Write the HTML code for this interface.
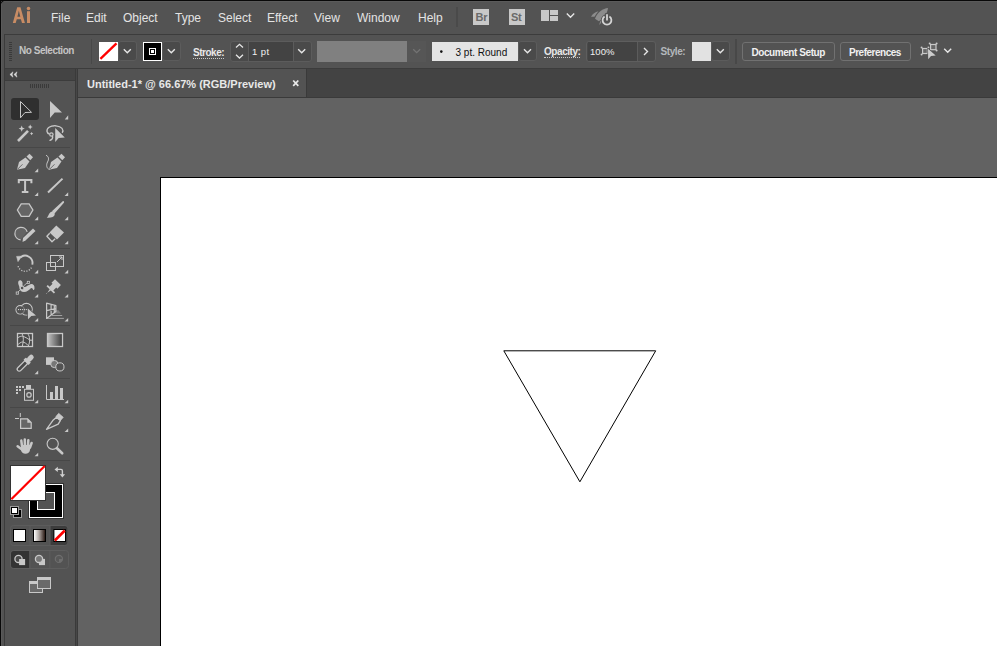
<!DOCTYPE html>
<html><head><meta charset="utf-8">
<style>
*{margin:0;padding:0;box-sizing:border-box}
html,body{width:997px;height:646px;overflow:hidden;background:#535353;font-family:"Liberation Sans",sans-serif}
.a{position:absolute}
.t{position:absolute;white-space:nowrap;line-height:1}
.m{font-size:12px;color:#e4e4e4;top:12px}
.c{font-size:9.5px;font-weight:bold;color:#e6e6e6}
</style></head>
<body>
<!-- window edge -->
<div class="a" style="left:0;top:0;width:997px;height:1px;background:#080808"></div>
<div class="a" style="left:0;top:0;width:1px;height:646px;background:#080808"></div>
<div class="a" style="left:4px;top:1px;width:993px;height:1px;background:#5a5a5a"></div>
<div class="a" style="left:1px;top:4px;width:1px;height:642px;background:#5a5a5a"></div>
<svg class="a" style="left:0;top:0" width="5" height="5"><rect x="1" y="1" width="3" height="3" fill="#535353"/><rect x="1" y="1" width="1" height="1" fill="#3c3c3c"/><rect x="2" y="1" width="1" height="1" fill="#151515"/><rect x="1" y="2" width="1" height="1" fill="#151515"/><rect x="3" y="1" width="1" height="1" fill="#454545"/><rect x="1" y="3" width="1" height="1" fill="#454545"/><rect x="2" y="2" width="1" height="1" fill="#4a4a4a"/></svg>

<!-- menu bar -->
<svg class="a" style="left:0;top:0" width="40" height="30"><path fill-rule="evenodd" d="M12.8 23 L17.2 7.2 L20.5 7.2 L24.9 23 L22 23 L20.9 19.2 L16.8 19.2 L15.7 23 Z M17.4 16.8 L20.3 16.8 L18.85 10.8 Z" fill="#c88c64"/><rect x="27" y="11.2" width="3" height="11.8" fill="#c88c64"/><circle cx="28.5" cy="8.6" r="1.75" fill="#c88c64"/></svg>
<div class="t m" style="left:51px">File</div>
<div class="t m" style="left:86px">Edit</div>
<div class="t m" style="left:123px">Object</div>
<div class="t m" style="left:175px">Type</div>
<div class="t m" style="left:218px">Select</div>
<div class="t m" style="left:267px">Effect</div>
<div class="t m" style="left:314px">View</div>
<div class="t m" style="left:357px">Window</div>
<div class="t m" style="left:418px">Help</div>
<div class="a" style="left:456px;top:7px;width:2px;height:20px;background:#4a4a4a"></div>
<div class="a" style="left:473px;top:9px;width:16px;height:16px;background:#c8c8c8"></div>
<div class="t" style="left:475.5px;top:12px;font-size:11px;font-weight:bold;color:#6a6a6a;letter-spacing:-0.3px">Br</div>
<div class="a" style="left:509px;top:9px;width:16px;height:16px;background:#c8c8c8"></div>
<div class="t" style="left:511px;top:12px;font-size:11px;font-weight:bold;color:#6a6a6a;letter-spacing:-0.3px">St</div>
<svg class="a" style="left:0;top:0" width="640" height="34">
 <rect x="541" y="10" width="8" height="11" fill="#c8c8c8"/>
 <rect x="550" y="10" width="8" height="5" fill="#c8c8c8"/>
 <rect x="550" y="16" width="8" height="5" fill="#c8c8c8"/>
 <path d="M566.8 13.5 L570.5 17.2 L574.2 13.5" fill="none" stroke="#e6e6e6" stroke-width="1.4"/>
 <path d="M608 8 C603 8.5 597.5 12 595 18.7 L598.8 21.2 C604 18 607.5 13 608 8 Z" fill="#8c8c8c"/>
 <path d="M598.5 11.2 C595 12 592.5 14 591 16.7 L594.5 16.8 C595.8 14.5 597 12.8 598.5 11.2 Z" fill="#8c8c8c"/>
 <path d="M600.8 20.3 C599.8 22 599.4 23.5 599.4 25 C600.6 23.8 601.5 22.5 602 21.3 Z" fill="#8c8c8c"/>
 <circle cx="607" cy="20.3" r="6.2" fill="#535353"/>
 <path d="M604.6 16.6 A4.4 4.4 0 1 0 609.4 16.6" fill="none" stroke="#d4d4d4" stroke-width="1.8"/>
 <path d="M607 13 L607 21.5" stroke="#535353" stroke-width="3.6"/>
 <path d="M607 14.3 L607 20.6" stroke="#d4d4d4" stroke-width="1.8"/>
</svg>

<!-- control bar -->
<div class="a" style="left:4px;top:34px;width:993px;height:35px;border:1px solid #3c3c3c;border-right:none;background:#535353"></div>
<svg class="a" style="left:0;top:34px" width="997" height="34">
 <g fill="#3a3a3a">
  <rect x="9" y="8" width="3" height="1"/><rect x="9" y="10" width="3" height="1"/><rect x="9" y="12" width="3" height="1"/>
  <rect x="9" y="14" width="3" height="1"/><rect x="9" y="16" width="3" height="1"/><rect x="9" y="18" width="3" height="1"/>
  <rect x="9" y="20" width="3" height="1"/><rect x="9" y="22" width="3" height="1"/><rect x="9" y="24" width="3" height="1"/>
  <rect x="9" y="26" width="3" height="1"/>
 </g>
 <rect x="91" y="5" width="1" height="25" fill="#484848"/>
 <rect x="735" y="5" width="2" height="25" fill="#484848"/>
 <!-- fill swatch -->
 <rect x="99" y="8" width="19" height="19" fill="#fff"/>
 <path d="M100.4 24.9 L116.5 9.4" stroke="#f00" stroke-width="2.3"/>
 <rect x="118.5" y="7.5" width="18" height="19" rx="2.5" fill="#4a4a4a" stroke="#5c5c5c"/>
 <path d="M123.8 15.2 L127.3 18.7 L130.8 15.2" fill="none" stroke="#e6e6e6" stroke-width="1.4"/>
 <!-- stroke swatch -->
 <rect x="143" y="8" width="19" height="19" fill="#fff"/>
 <rect x="144" y="9" width="17" height="17" fill="#000"/>
 <rect x="149.5" y="14.5" width="6" height="6" fill="none" stroke="#fff"/>
 <rect x="151" y="16" width="3" height="3" fill="#fff"/>
 <rect x="162.5" y="7.5" width="18" height="19" rx="2.5" fill="#4a4a4a" stroke="#5c5c5c"/>
 <path d="M167.8 15.2 L171.3 18.7 L174.8 15.2" fill="none" stroke="#e6e6e6" stroke-width="1.4"/>
 <!-- stroke weight -->
 <rect x="230.5" y="7.5" width="81" height="20" rx="2.5" fill="#4a4a4a" stroke="#5c5c5c"/>
 <rect x="249" y="8" width="44" height="19" fill="#434343"/>
 <rect x="248" y="8" width="1" height="19" fill="#5c5c5c"/>
 <rect x="293" y="8" width="1" height="19" fill="#5c5c5c"/>
 <path d="M236 13.5 L239.5 10.3 L243 13.5 M236 20.8 L239.5 24 L243 20.8" fill="none" stroke="#e6e6e6" stroke-width="1.3"/>
 <path d="M298.2 15.2 L301.7 18.7 L305.2 15.2" fill="none" stroke="#e6e6e6" stroke-width="1.4"/>
 <!-- disabled -->
 <rect x="317" y="7" width="90" height="21" fill="#808080"/>
 <rect x="407" y="7" width="19" height="21" fill="#565656"/>
 <path d="M413.2 15.2 L416.7 18.7 L420.2 15.2" fill="none" stroke="#747474" stroke-width="1.3"/>
 <!-- profile -->
 <rect x="432" y="8" width="86" height="19" fill="#e4e4e4"/>
 <circle cx="441.3" cy="17.6" r="1.3" fill="#111"/>
 <rect x="518.5" y="7.5" width="18" height="19" rx="2.5" fill="#4a4a4a" stroke="#5c5c5c"/>
 <path d="M524 15.2 L527.5 18.7 L531 15.2" fill="none" stroke="#e6e6e6" stroke-width="1.4"/>
 <!-- opacity -->
 <rect x="586.5" y="7.5" width="69" height="20" rx="2.5" fill="#4a4a4a" stroke="#5e5e5e"/>
 <rect x="588" y="8" width="49" height="19" fill="#434343"/>
 <rect x="637" y="8" width="1" height="19" fill="#5c5c5c"/>
 <path d="M644 14 L647.5 17.5 L644 21" fill="none" stroke="#e6e6e6" stroke-width="1.4"/>
 <!-- style -->
 <rect x="692" y="8" width="19" height="19" fill="#e2e2e2"/>
 <rect x="711.5" y="7.5" width="18" height="19" rx="2.5" fill="#4a4a4a" stroke="#5c5c5c"/>
 <path d="M716.8 15.2 L720.3 18.7 L723.8 15.2" fill="none" stroke="#e6e6e6" stroke-width="1.4"/>
 <!-- buttons -->
 <rect x="742.5" y="8.5" width="92" height="18" rx="2.5" fill="#535353" stroke="#717171"/>
 <rect x="840.5" y="8.5" width="70" height="18" rx="2.5" fill="#535353" stroke="#717171"/>
 <!-- isolate icon -->
 <g transform="translate(0,-34)">
 <rect x="922.6" y="48.5" width="4.8" height="5" fill="#666" stroke="#c8c8c8" stroke-width="1.2"/>
 <rect x="930.6" y="44.5" width="5.4" height="5.2" fill="#666" stroke="#c8c8c8" stroke-width="1.2"/>
 <g fill="#c8c8c8"><circle cx="921.6" cy="47.5" r="1"/><circle cx="921.6" cy="54.6" r="1"/><circle cx="928.4" cy="47.5" r="1"/><circle cx="929.7" cy="43.5" r="1"/><circle cx="936.6" cy="43.5" r="1"/><circle cx="936.6" cy="50.5" r="1"/></g>
 <path d="M928 48.8 L935.7 55.6 L931 56 L928.2 59.2 Z" fill="#535353" stroke="#535353" stroke-width="1.4"/>
 <path d="M928 48.8 L935.7 55.6 L931 56 L928.2 59.2 Z" fill="#cccccc"/>
 </g>
 <path d="M944.2 14.8 L947.7 18.3 L951.2 14.8" fill="none" stroke="#e6e6e6" stroke-width="1.4"/>
</svg>
<div class="t c" style="left:19px;top:46px;font-size:10px;color:#c4c4c4;letter-spacing:-0.47px">No Selection</div>
<div class="t c" style="left:193px;top:48px;font-size:10px;color:#e8e8e8;letter-spacing:-0.47px">Stroke:</div>
<div class="a" style="left:193px;top:58px;width:31px;height:1px;border-top:1px dotted #c8c8c8"></div>
<div class="t" style="left:252px;top:47px;font-size:9.5px;color:#f0f0f0;letter-spacing:0.4px">1 pt</div>
<div class="t" style="left:455.5px;top:47.5px;font-size:10px;color:#101010">3 pt. Round</div>
<div class="t c" style="left:544px;top:47px;font-size:10px;color:#e8e8e8;letter-spacing:-0.44px">Opacity:</div>
<div class="a" style="left:544px;top:57px;width:36px;height:1px;border-top:1px dotted #c8c8c8"></div>
<div class="t" style="left:590px;top:47px;font-size:9.5px;color:#f0f0f0;letter-spacing:0.05px">100%</div>
<div class="t c" style="left:660.5px;top:47px;font-size:10px;color:#b4b8bc;letter-spacing:-0.42px">Style:</div>
<div class="t c" style="left:751.5px;top:48px;font-size:10px;color:#f0f0f0;letter-spacing:-0.43px">Document Setup</div>
<div class="t c" style="left:849px;top:48px;font-size:10px;color:#f0f0f0;letter-spacing:-0.49px">Preferences</div>

<!-- toolbar panel -->
<div class="a" style="left:4px;top:69px;width:1px;height:577px;background:#3c3c3c"></div>
<div class="a" style="left:75px;top:69px;width:1px;height:577px;background:#3a3a3a"></div>
<div class="a" style="left:76px;top:69px;width:1px;height:577px;background:#474747"></div>
<div class="a" style="left:77px;top:69px;width:1px;height:577px;background:#3a3a3a"></div>
<div class="a" style="left:5px;top:69px;width:70px;height:11px;background:#444444"></div>
<div class="a" style="left:5px;top:80px;width:70px;height:1px;background:#3c3c3c"></div>

<!-- tab bar -->
<div class="a" style="left:78px;top:69px;width:919px;height:28px;background:#434343"></div>
<div class="a" style="left:78px;top:69px;width:228px;height:28px;background:#535353"></div>
<div class="a" style="left:306px;top:69px;width:1px;height:28px;background:#3a3a3a"></div>
<div class="a" style="left:78px;top:97px;width:919px;height:1px;background:#3a3a3a"></div>
<div class="t" style="left:87px;top:79px;font-size:11px;font-weight:bold;color:#e8e8e8">Untitled-1* @ 66.67% (RGB/Preview)</div>
<svg class="a" style="left:290px;top:78px" width="12" height="10"><path d="M3.2 2.5 L8.3 7.8 M8.3 2.5 L3.2 7.8" stroke="#e8e8e8" stroke-width="1.8"/></svg>

<!-- canvas -->
<div class="a" style="left:78px;top:98px;width:919px;height:548px;background:#626262"></div>
<div class="a" style="left:160px;top:177px;width:837px;height:469px;background:#fff;border-left:1px solid #000;border-top:1px solid #000"></div>
<svg class="a" style="left:0;top:0" width="997" height="646">
<path d="M503.8 350.8 L655.7 350.8 L579.9 481.8 Z" fill="none" stroke="#000" stroke-width="1"/>
</svg>

<!-- TOOLS -->
<svg class="a" style="left:0;top:0" width="78" height="646">
 <!-- header chevrons -->
 <path d="M9.9 74.5 L13 71.8 L12.2 74.5 L13 77.2 Z M13.9 74.5 L17 71.8 L16.2 74.5 L17 77.2 Z" fill="#d8d8d8" stroke="#d8d8d8" stroke-width="0.5" stroke-linejoin="round"/>
 <g fill="#3a3a3a"><rect x="30" y="84" width="1" height="4"/><rect x="32" y="84" width="1" height="4"/><rect x="34" y="84" width="1" height="4"/><rect x="36" y="84" width="1" height="4"/><rect x="38" y="84" width="1" height="4"/><rect x="40" y="84" width="1" height="4"/><rect x="42" y="84" width="1" height="4"/><rect x="44" y="84" width="1" height="4"/><rect x="46" y="84" width="1" height="4"/><rect x="48" y="84" width="1" height="4"/></g>
 <!-- separators -->
 <g fill="#474747">
  <rect x="10" y="147" width="60" height="1"/>
  <rect x="10" y="248" width="60" height="1"/>
  <rect x="10" y="325" width="60" height="1"/>
  <rect x="10" y="378" width="60" height="1"/>
  <rect x="10" y="407" width="60" height="1"/>
  <rect x="10" y="460" width="60" height="1"/>
 </g>
 <!-- selected -->
 <rect x="11" y="98" width="28" height="22" rx="3" fill="#2f2f2f"/>
 <g fill="#c8c8c8" stroke="none">
  <!-- corner triangles -->
  <path d="M68.2 115.3 L68.2 119.4 L64.8 119.4 Z"/>
  <path d="M38.2 168.6 L38.2 172.2 L34.6 172.2 Z"/>
  <path d="M38.2 192.3 L38.2 196 L34.6 196 Z"/>
  <path d="M68.2 192.3 L68.2 196 L64.6 196 Z"/>
  <path d="M38.2 216.5 L38.2 220.2 L34.6 220.2 Z"/>
  <path d="M68.2 216.5 L68.2 220.2 L64.6 220.2 Z"/>
  <path d="M38.2 240.7 L38.2 244.3 L34.6 244.3 Z"/>
  <path d="M68.2 240.7 L68.2 244.3 L64.6 244.3 Z"/>
  <path d="M38.2 269.8 L38.2 273.4 L34.6 273.4 Z"/>
  <path d="M68.2 269.8 L68.2 273.4 L64.6 273.4 Z"/>
  <path d="M38.2 294 L38.2 297.6 L34.6 297.6 Z"/>
  <path d="M68.2 294 L68.2 297.6 L64.6 297.6 Z"/>
  <path d="M38.2 318 L38.2 321.6 L34.6 321.6 Z"/>
  <path d="M68.2 318 L68.2 321.6 L64.6 321.6 Z"/>
  <path d="M38.2 370.6 L38.2 374.2 L34.6 374.2 Z"/>
  <path d="M38.2 399.7 L38.2 403.3 L34.6 403.3 Z"/>
  <path d="M68.2 399.7 L68.2 403.3 L64.6 403.3 Z"/>
  <path d="M68.2 428.5 L68.2 432.1 L64.6 432.1 Z"/>
  <path d="M38.2 452.7 L38.2 456.3 L34.6 456.3 Z"/>
 </g>
 <!-- selection -->
 <path d="M20.5 101.5 L31.5 112.3 L25 112.5 L20.5 117.8 Z" fill="none" stroke="#c8c8c8" stroke-width="1"/>
 <!-- direct selection -->
 <path d="M50 101 L62 112.5 L54.7 112.5 L50 118 Z" fill="#c8c8c8"/>
 <!-- magic wand -->
 <path d="M18 141 L28 130.8" stroke="#c8c8c8" stroke-width="2.6"/>
 <path d="M21.7 125.5 L22.6 127.7 L24.8 128.6 L22.6 129.5 L21.7 131.7 L20.8 129.5 L18.6 128.6 L20.8 127.7 Z" fill="#c8c8c8"/>
 <path d="M30.2 124.5 L31 126.2 L32.7 127 L31 127.8 L30.2 129.5 L29.4 127.8 L27.7 127 L29.4 126.2 Z" fill="#c8c8c8"/>
 <path d="M31.6 132 L32.2 133 L33.2 133.6 L32.2 134.2 L31.6 135.2 L31 134.2 L30 133.6 L31 133 Z" fill="#c8c8c8"/>
 <!-- lasso -->
 <path d="M62.2 132.8 C64 130 62 126.3 56 125.8 C50 125.5 46.5 128 47 131.5 C47.3 133 48.3 133.8 49.5 134" fill="none" stroke="#c8c8c8" stroke-width="1.3"/>
 <circle cx="51.4" cy="134.5" r="1.7" fill="none" stroke="#c8c8c8" stroke-width="1.2"/>
 <path d="M52.6 136.3 C53 138 51.7 139.6 50 140.4" fill="none" stroke="#c8c8c8" stroke-width="1.3" stroke-linecap="round"/>
 <path d="M55.2 128.1 L64.8 137.4 L58.7 138 L55.2 141.9 Z" fill="#535353" stroke="#535353" stroke-width="1.6"/>
 <path d="M55.2 128.1 L64.8 137.4 L58.7 138 L55.2 141.9 Z" fill="#c8c8c8"/>
 <!-- pen -->
 <path d="M17 169.8 L19 162 L25.5 157.5 L29.5 161.5 L25 168 Z" fill="#c8c8c8"/>
 <path d="M26.5 156.5 L29.5 153.8 L33 157.3 L30.3 160.3 Z" fill="#c8c8c8"/>
 <path d="M17.5 169.3 L22.5 164.3" stroke="#535353" stroke-width="0.8"/>
 <!-- curvature pen -->
 <path d="M49 169.8 L51 162 L57.5 157.5 L61.5 161.5 L57 168 Z" fill="#c8c8c8"/>
 <path d="M58.5 156.5 L61.5 153.8 L65 157.3 L62.3 160.3 Z" fill="#c8c8c8"/>
 <path d="M49.5 169.3 L54.5 164.3" stroke="#535353" stroke-width="0.8"/>
 <path d="M46 155.3 C49 156.5 49 159.5 47.5 162 C46 165 46.5 168.5 49.5 169.5" fill="none" stroke="#c8c8c8" stroke-width="1"/>
 <!-- type -->
 <path d="M18.8 183.3 L18.8 179.9 L31.4 179.9 L31.4 183.3 M25.1 179.9 L25.1 192 M21.8 192.1 L28.4 192.1" fill="none" stroke="#c8c8c8" stroke-width="2"/>
 <!-- line -->
 <path d="M48 192.5 L62.5 178.6" stroke="#c8c8c8" stroke-width="2"/>
 <!-- hexagon -->
 <path d="M21.2 203.8 L29.1 203.8 L32.9 210 L29.1 216.3 L21.2 216.3 L17.4 210 Z" fill="#656565" stroke="#c8c8c8" stroke-width="1.3"/>
 <!-- paintbrush -->
 <path d="M54.32 213.68 L51.88 211.32 L62.48 201.4 C63 200.9 63.7 201 64 201.6 C64.2 202 64.1 202.5 63.92 202.8 Z" fill="#c8c8c8"/>
 <path d="M46.8 217.7 C48.5 216.5 48.5 213.5 50.5 212.3 C52.5 211 55 212.5 54.7 214.8 C54.3 217 51 218 46.8 217.7 Z" fill="#c8c8c8"/>
 <!-- shaper -->
 <path d="M20.6 239.9 A6.3 6.3 0 1 1 27.2 231.8" fill="#636363" stroke="#c8c8c8" stroke-width="1.2"/>
 <path d="M22.5 242 L23 238 L33 228.5 L35.5 231 L25.5 240.5 Z" fill="#c8c8c8"/>
 <!-- eraser -->
 <path d="M56.3 225.4 L64 232.5 L57 239.5 L49.5 232.5 Z" fill="#c8c8c8"/>
 <path d="M49.7 233.2 L46.9 236.3 L52 241.8 L55.2 238.8" fill="none" stroke="#c8c8c8" stroke-width="1.3" stroke-linejoin="round"/>
 <!-- rotate -->
 <path d="M20.3 257.6 A7.3 7.3 0 0 1 32.3 264.6" fill="none" stroke="#c8c8c8" stroke-width="1.9"/>
 <path d="M16.6 256.4 L21.8 256.2 L18 261.6 Z" fill="#c8c8c8" stroke="#c8c8c8" stroke-width="0.6" stroke-linejoin="round"/>
 <path d="M31.4 267.6 A7.3 7.3 0 0 1 17.9 265.5" fill="none" stroke="#c8c8c8" stroke-width="1.3" stroke-dasharray="1.1 1.5"/>
 <!-- scale -->
 <rect x="50.5" y="255.5" width="13" height="11" fill="none" stroke="#c8c8c8" stroke-width="1"/>
 <rect x="46.5" y="262.5" width="9" height="8" fill="none" stroke="#c8c8c8" stroke-width="1"/>
 <path d="M57 262 L62 257 M59 257 L62 257 L62 260" fill="none" stroke="#c8c8c8" stroke-width="1"/>
 <!-- puppet warp -->
 <path d="M18.2 283.5 C17.8 281 19.5 279.8 21 280.5 C22.5 281.2 22.8 283 22.5 284.5 C22.3 286 23 287 24.5 287 C26.5 287 28 284.8 30.5 284.2 C33 283.6 34.8 285.5 34.5 288.5 C34.3 290 33.5 290.5 33 289.5 C32.5 288 31.5 287.5 30.5 288.5 C29 290 27 292 24 292 C21 292 19.5 290 19.5 288 C19.5 286.5 18.5 285 18.2 283.5 Z" fill="#c8c8c8"/>
 <circle cx="22.1" cy="288" r="1.9" fill="#535353" stroke="#d0d0d0" stroke-width="1"/>
 <rect x="16.2" y="292" width="2.2" height="2.2" fill="#535353" stroke="#c8c8c8" stroke-width="0.8"/>
 <rect x="27.3" y="281.3" width="2.2" height="2.2" fill="#535353" stroke="#c8c8c8" stroke-width="0.8"/>
 <path d="M18 292 L21 289 M23.5 286 L27 283" stroke="#c8c8c8" stroke-width="0.8"/>
 <!-- pin -->
 <path d="M46.51 294.01 L49.62 289.35 L46.51 286.24 L47.78 284.96 L49.62 286.8 L52.59 283.83 L51.46 282.7 L55.0 279.17 L60.93 285.1 L57.4 288.64 L56.27 287.51 L53.3 290.48 L55.14 292.32 L53.86 293.59 L50.75 290.48 L46.09 293.59 Z" fill="#c8c8c8"/>
 <!-- shape builder -->
 <circle cx="20.2" cy="309.8" r="4.2" fill="none" stroke="#c8c8c8" stroke-width="1.2"/>
 <circle cx="26.4" cy="309.2" r="5.8" fill="none" stroke="#c8c8c8" stroke-width="1.2"/>
 <circle cx="20.2" cy="309.8" r="3.6" fill="#535353"/>
 <circle cx="26.4" cy="309.2" r="5.2" fill="#535353"/>
 <path d="M22.2 306.1 A4.2 4.2 0 0 1 22.2 313.5" fill="none" stroke="#858585" stroke-width="1"/>
 <g fill="#d0d0d0"><rect x="18" y="309" width="1.1" height="1.1"/><rect x="20" y="309" width="1.1" height="1.1"/><rect x="22.1" y="309" width="1.1" height="1.1"/><rect x="24.1" y="309" width="1.1" height="1.1"/><rect x="26.2" y="309" width="1.1" height="1.1"/></g>
 <path d="M27.8 308.5 L36 315.6 L31.3 316 L28 319.3 Z" fill="#535353" stroke="#535353" stroke-width="1.2"/><path d="M27.8 308.5 L36 315.6 L31.3 316 L28 319.3 Z" fill="#c8c8c8"/>
 <!-- perspective grid -->
 <path d="M55 310.3 L58.5 310.3 L61 313.6 L53 313.6 Z" fill="#7a7a7a"/>
 <path d="M52 315.5 L62.2 315.5 M46.6 318.4 L63.9 318.4" fill="none" stroke="#a0a0a0" stroke-width="1"/>
 <path d="M46.6 303.2 L46.6 318.4 L55.9 311.4 L55.9 305.6 Z M51.1 304.4 L51.1 315 M54.3 305.2 L54.3 312.6 M46.6 310.6 L55.9 308.6" fill="none" stroke="#c8c8c8" stroke-width="1.2" stroke-linejoin="round"/>
 <!-- mesh -->
 <rect x="17.5" y="333.5" width="15" height="13" fill="#484848" stroke="#c8c8c8" stroke-width="1.3"/>
 <path d="M22 333.5 C24 337 23.5 341 22.3 346.5 M17.5 338 C19.5 336.5 21 336 22.6 336.3 C25 337 27 338 29.8 340 M27.5 333.5 C30 336 30.5 342 28 346.5 M29.8 340.2 L32.5 340.2 M17.5 345 C19 343.5 21 342 22.6 342 C24.5 342.3 26.5 343.5 28.2 345.5" fill="none" stroke="#c8c8c8" stroke-width="1"/>
 <!-- gradient -->
 <defs><linearGradient id="g1" x1="0" x2="1"><stop offset="0" stop-color="#c4c4c4"/><stop offset="1" stop-color="#383838"/></linearGradient>
 <linearGradient id="g2" x1="0" x2="1"><stop offset="0" stop-color="#ffffff"/><stop offset="0.45" stop-color="#b0a8a4"/><stop offset="1" stop-color="#2a1a14"/></linearGradient></defs>
 <rect x="47.5" y="333.5" width="15" height="13" fill="url(#g1)" stroke="#c8c8c8" stroke-width="1.3"/>
 <!-- eyedropper -->
 <g transform="translate(17.8,370.6) rotate(-45)">
  <rect x="0" y="-2" width="13" height="4" rx="2" fill="#484848" stroke="#c8c8c8" stroke-width="1.3"/>
  <rect x="11.5" y="-3.6" width="3.5" height="7.2" rx="0.8" fill="#c8c8c8"/>
  <rect x="14" y="-2.5" width="7.5" height="5" rx="2.5" fill="#c8c8c8"/>
 </g>
 <!-- blend -->
 <rect x="46" y="357.3" width="8" height="7.6" fill="#c8c8c8"/>
 <circle cx="54.3" cy="364" r="3.6" fill="#777" stroke="#c8c8c8" stroke-width="1"/>
 <circle cx="59.9" cy="366.9" r="4.1" fill="#535353" stroke="#c8c8c8" stroke-width="1"/>
 <!-- symbol sprayer -->
 <g fill="#c8c8c8"><rect x="16" y="386" width="2" height="2"/><rect x="19" y="386" width="2" height="2"/><rect x="22" y="386" width="2" height="2"/><rect x="16" y="389" width="2" height="2"/><rect x="19" y="389" width="2" height="2"/><rect x="16" y="392" width="2" height="2"/></g>
 <rect x="24.5" y="389.3" width="9" height="11" fill="none" stroke="#c8c8c8" stroke-width="1"/>
 <rect x="26" y="385" width="5" height="4" fill="#c8c8c8"/>
 <circle cx="29" cy="394.9" r="2.2" fill="none" stroke="#c8c8c8" stroke-width="1.2"/>
 <!-- graph -->
 <path d="M46.5 385 L46.5 399.5 L64 399.5" fill="none" stroke="#c8c8c8" stroke-width="1"/>
 <rect x="50" y="392" width="3" height="7" fill="#c8c8c8"/>
 <rect x="55" y="386" width="3" height="13" fill="#c8c8c8"/>
 <rect x="60" y="388" width="3" height="11" fill="#c8c8c8"/>
 <!-- artboard -->
 <path d="M20.3 413 L20.3 417 M15 418.5 L19 418.5" stroke="#c8c8c8" stroke-width="1"/>
 <path d="M20.6 418.8 L27.6 418.8 L31.2 422.4 L31.2 428.3 L20.6 428.3 Z" fill="#666" stroke="#c8c8c8" stroke-width="1.2" stroke-linejoin="miter"/>
 <path d="M27.3 418.6 L31.4 422.7 L27.3 422.7 Z" fill="#c8c8c8"/>
 <!-- slice -->
 <path d="M46.5 429.3 L53.3 419.9 L56.5 417.2 L60.3 420.6 L58.2 424.2 Z" fill="none" stroke="#c8c8c8" stroke-width="1.3" stroke-linejoin="round"/>
 <path d="M55.8 416.6 L58.7 413.3 L63.3 417.3 L60.4 420.7 Z" fill="#c8c8c8" stroke="#c8c8c8" stroke-width="0.6" stroke-linejoin="round"/>
 <!-- hand -->
 <path d="M21.3 440.6 L22 446 M24.8 439.6 L24.9 446 M28.3 440.3 L28 446 M31.6 443 L30 447.5 M17.6 446.3 L22 449.6" fill="none" stroke="#c8c8c8" stroke-width="2.5" stroke-linecap="round"/>
 <path d="M21 445 L30.6 445 L30 450 C29.5 452.5 28 453.8 25.5 453.8 C23 453.8 21.5 452.5 21 450 Z" fill="#c8c8c8"/>
 <!-- zoom -->
 <circle cx="52.7" cy="443.8" r="5.6" fill="none" stroke="#c8c8c8" stroke-width="1.1"/>
 <path d="M57 448.2 L62.2 453.3" stroke="#c8c8c8" stroke-width="2.6" stroke-linecap="round"/>
 <!-- fill box -->
 <rect x="10.5" y="465.5" width="35" height="35" fill="#fff" stroke="#333"/>
 <!-- stroke box -->
 <rect x="28.5" y="483.5" width="35" height="35" fill="#000" stroke="#333"/>
 <rect x="29.5" y="484.5" width="33" height="33" fill="none" stroke="#fff"/>
 <rect x="37.5" y="492.5" width="17" height="17" fill="#535353" stroke="#fff"/>
 <!-- redraw fill over -->
 <rect x="10.5" y="465.5" width="35" height="35" fill="#fff" stroke="#333"/>
 <path d="M11.3 499.3 L44.7 466" stroke="#f00" stroke-width="2.2"/>
 <!-- swap -->
 <path d="M57 469.4 L61 469.4 C62 469.4 62.4 469.9 62.4 471 L62.4 475" fill="none" stroke="#cfcfcf" stroke-width="1.4"/>
 <path d="M54.5 469.4 L57.8 466.8 L57.8 472 Z M62.4 477.5 L59.7 474.2 L65.1 474.2 Z" fill="#cfcfcf"/>
 <!-- default -->
 <rect x="13" y="509" width="9" height="9" fill="#999"/>
 <rect x="14" y="510" width="7" height="7" fill="#000"/>
 <path d="M18.5 512 L18.5 514.4 L16 514.4" fill="none" stroke="#aaa" stroke-width="1"/>
 <rect x="10" y="506" width="9" height="9" fill="#999"/>
 <rect x="11" y="507" width="7" height="7" fill="#000"/>
 <rect x="12" y="508" width="5" height="5" fill="#fff"/>
 <!-- color mode group -->
 <rect x="10.5" y="525.5" width="57" height="20" rx="3" fill="#535353" stroke="#5c5c5c"/>
 <path d="M50 526 L64.5 526 A3 3 0 0 1 67.5 529 L67.5 542 A3 3 0 0 1 64.5 545 L50 545 Z" fill="#3c3c3c"/>
 <rect x="29.5" y="526" width="1" height="19" fill="#5c5c5c"/>
 <rect x="49.5" y="526" width="1" height="19" fill="#5c5c5c"/>
 <rect x="13" y="529" width="13" height="13" fill="#000"/>
 <rect x="14" y="530" width="11" height="11" fill="#fff"/>
 <rect x="33" y="529" width="13" height="13" fill="#000"/>
 <rect x="34" y="530" width="11" height="11" fill="url(#g2)"/>
 <rect x="53.4" y="529" width="12.6" height="13" fill="#000"/>
 <rect x="54.4" y="530" width="10.6" height="11" fill="#fff"/>
 <path d="M54.8 540.5 L64.8 530.5" stroke="#f00" stroke-width="2.6"/>
 <!-- draw mode group -->
 <rect x="10.5" y="550.5" width="58" height="18" rx="3" fill="#535353" stroke="#5e5e5e"/>
 <path d="M14 551 L29.1 551 L29.1 568 L14 568 A3 3 0 0 1 11 565 L11 554 A3 3 0 0 1 14 551 Z" fill="#333"/>
 <rect x="29.5" y="551" width="1" height="17" fill="#5c5c5c"/>
 <rect x="49.3" y="551" width="1" height="17" fill="#5c5c5c"/>
 <circle cx="18.5" cy="558.9" r="3.6" fill="#4a4a4a" stroke="#c8c8c8" stroke-width="1.3"/>
 <rect x="19.1" y="559" width="6" height="6.1" fill="#c8c8c8"/>
 <rect x="39" y="558.9" width="6" height="6.2" fill="#c8c8c8"/>
 <circle cx="39" cy="558.9" r="3.6" fill="#777" stroke="#c8c8c8" stroke-width="1.3"/>
 <circle cx="58.9" cy="558.9" r="3.6" fill="#585858" stroke="#6e6e6e" stroke-width="1.2"/>
 <path d="M59 559 L62.5 559 A3.6 3.6 0 0 1 59 562.5 Z" fill="#6e6e6e"/>
 <!-- screen mode -->
 <rect x="29.5" y="581.5" width="13" height="11" fill="#6a6a6a" stroke="#c8c8c8" stroke-width="1"/>
 <rect x="29" y="581" width="14" height="3" fill="#c8c8c8"/>
 <rect x="37.5" y="577.5" width="13" height="11" fill="#6a6a6a" stroke="#c8c8c8" stroke-width="1"/>
 <rect x="37" y="577" width="14" height="3" fill="#c8c8c8"/>
</svg>
</body></html>
